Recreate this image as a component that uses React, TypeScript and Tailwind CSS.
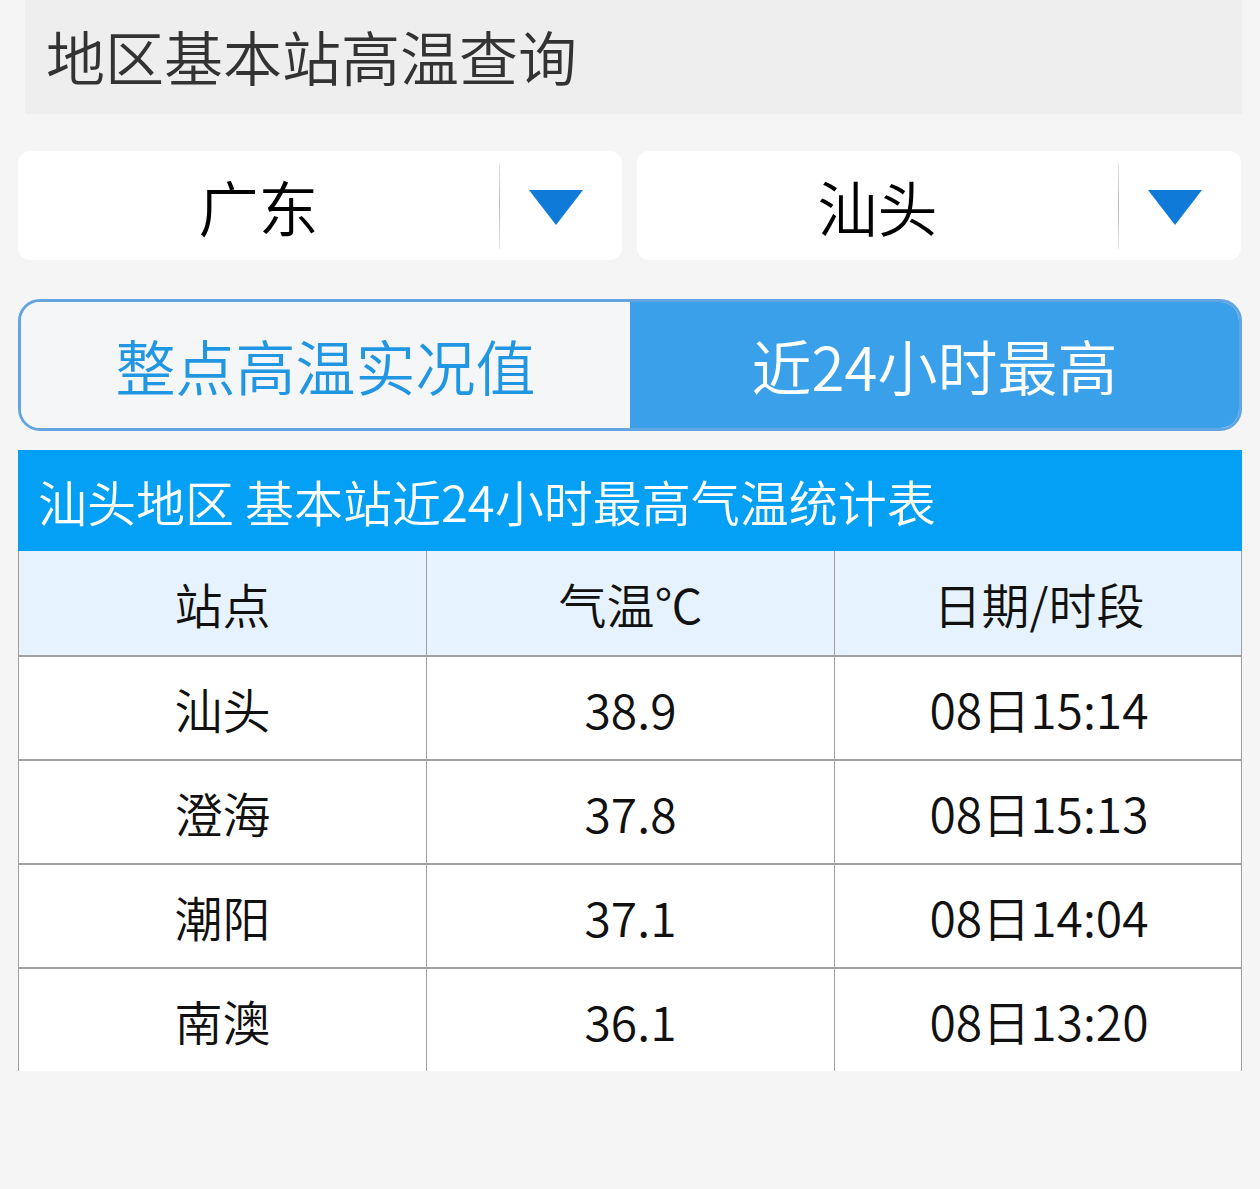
import React from "react";

const rows = [
  ["汕头", "38.9", "08日15:14"],
  ["澄海", "37.8", "08日15:13"],
  ["潮阳", "37.1", "08日14:04"],
  ["南澳", "36.1", "08日13:20"],
];

function Dropdown({ label }: { label: string }) {
  return (
    <div className="flex h-[109px] w-[604px] items-center rounded-[12px] bg-white">
      <div className="flex flex-1 items-center justify-center text-[60px] font-[350] leading-none text-black">
        {label}
      </div>
      <div className="h-[86px] w-px bg-gradient-to-b from-[#e8e8e8] via-[#b8b8b8] to-[#e8e8e8]" />
      <div className="flex w-[122px] items-center justify-center pr-[10px] pt-[4px]">
        <svg width="54" height="35" viewBox="0 0 54 35">
          <polygon points="0,0 54,0 27,35" fill="#0f7ad8" />
        </svg>
      </div>
    </div>
  );
}

export default function App() {
  return (
    <div
      className="h-[1189px] w-[1260px] overflow-hidden bg-[#f5f5f5]"
      style={{ fontFamily: '"Noto Sans CJK SC", "Noto Sans", sans-serif' }}
    >
      <div className="ml-[25px] mr-[18px] flex h-[114px] items-center bg-[#eeeeee] pb-[4px] pl-[21px] text-[59px] font-[350] leading-none text-[#333333]">
        地区基本站高温查询
      </div>

      <div className="mt-[37px] flex gap-[15px] px-[18px]">
        <Dropdown label="广东" />
        <Dropdown label="汕头" />
      </div>

      <div className="mx-[18px] mt-[39px] flex h-[132px] overflow-hidden rounded-[22px] border-[3px] border-[#62a5e2]">
        <div className="flex w-[609px] items-center justify-center bg-[#f5f6f8] text-[60px] font-[350] leading-none text-[#2196e3]">
          整点高温实况值
        </div>
        <div className="flex flex-1 items-center justify-center bg-[#3aa0ea] text-[60px] font-[350] leading-none text-white">
          近24小时最高
        </div>
      </div>

      <div className="ml-[18px] mt-[19px] w-[1224px]">
        <div className="flex h-[101px] items-center bg-[#03a0f6] pl-[20px] text-[49px] font-[350] leading-none text-white">
          汕头地区 基本站近24小时最高气温统计表
        </div>
        <div className="grid h-[104px] grid-cols-[407px_408px_409px] border-x border-[#a0a0a0] bg-[#e6f2fd] text-[48px] font-[350] leading-none text-[#111111]">
          <div className="flex items-center justify-center">站点</div>
          <div className="flex items-center justify-center border-l border-[#a0a0a0]">气温℃</div>
          <div className="flex items-center justify-center border-l border-[#a0a0a0]">日期/时段</div>
        </div>
        {rows.map((r, i) => (
          <div
            key={i}
            className="grid h-[104px] grid-cols-[407px_408px_409px] border-x border-t-2 border-[#a0a0a0] bg-white text-[48px] font-[350] leading-none text-[#111111]"
          >
            <div className="flex items-center justify-center">{r[0]}</div>
            <div className="flex items-center justify-center border-l border-[#a0a0a0]">{r[1]}</div>
            <div className="flex items-center justify-center border-l border-[#a0a0a0]">{r[2]}</div>
          </div>
        ))}
      </div>
    </div>
  );
}
